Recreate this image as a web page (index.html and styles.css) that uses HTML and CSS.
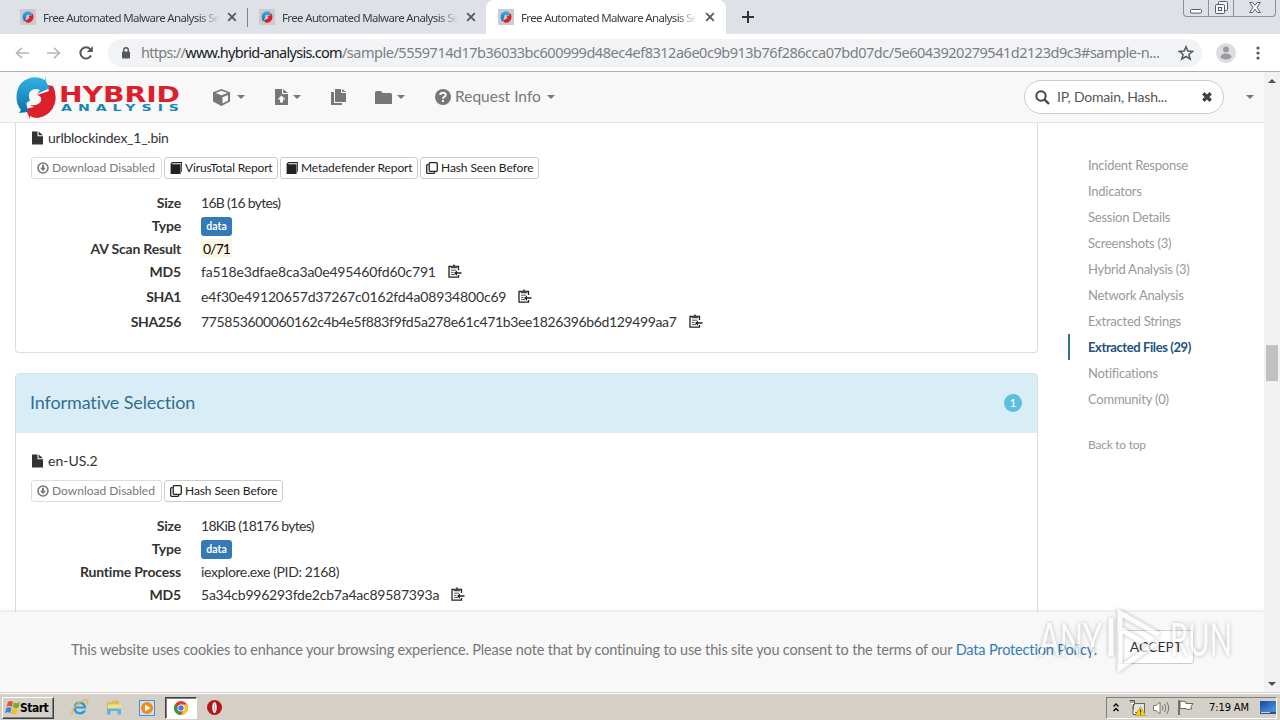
FILE: index.html
```html
<!DOCTYPE html>
<html lang="en">

<head>
  <meta charset="UTF-8">
  <meta name="viewport" content="width=device-width, initial-scale=1.0">
  <link rel="stylesheet" href="styles.css">
  <title>Free Automated Malware Analysis Service</title>
</head>

<body>

  <svg class="defs" width="0" height="0">
    <defs>
      <linearGradient id="blue" x1="0" y1="0" x2="0" y2="1"><stop offset="0" stop-color="#35b4e5"/><stop offset="1" stop-color="#0b71ae"/></linearGradient>
      <linearGradient id="screen" x1="0" y1="0" x2="1" y2="1"><stop offset="0" stop-color="#1746a0"/><stop offset="1" stop-color="#4e9be8"/></linearGradient>
      <symbol id="swirl" viewBox="0 0 40 43">
        <path d="M31 9L37 10Q41 18 39 27Q35 40 22 42Q17 42 14 40V43L11 36L9 33L18 31L14 29Q23 30 25 25Q26 20 21 19L33 15z" fill="#db202c"/>
        <path d="M29 0V4Q22 0 14 2Q3 5 1 16Q-1 27 5 34L3 37L12 36L11 30Q9 26 14 25Q11 17 16 14Q20 12 24 14L21 18L34 12Q30 8 29 0z" fill="url(#blue)"/>
      </symbol>
      <symbol id="close" viewBox="0 0 10 10"><path d="M1.2 1.2l7.6 7.6M8.8 1.2l-7.6 7.6" stroke="#55585c" stroke-width="1.8"/></symbol>
      <symbol id="file" viewBox="0 0 12 14"><path d="M0 0h6v5h6v9H0z" fill="#333"/><path d="M7.2 0L12 4H7.2z" fill="#333"/></symbol>
      <symbol id="download" viewBox="0 0 12 12"><circle cx="6" cy="6" r="5" fill="none" stroke="#777" stroke-width="1.6"/><path d="M5 2.8h2v3h2L6 9.2 3 5.8h2z" fill="#777"/></symbol>
      <symbol id="book" viewBox="0 0 12 12"><path d="M2.2 0H12v9.5l-.8.6V1.3H2.6L2 2.2h8.6V12H.6V1.8z" fill="#222"/></symbol>
      <symbol id="clone" viewBox="0 0 12 12"><rect x="3.2" y=".7" width="8.1" height="8.6" rx="1" fill="none" stroke="#222" stroke-width="1.3"/><path d="M2.6 2.7H1.5q-.8 0-.8.8v7q0 .8.8.8h6.4q.8 0 .8-.8v-.7" fill="none" stroke="#222" stroke-width="1.3"/></symbol>
      <symbol id="paste" viewBox="0 0 14 14"><path d="M10.5 6V2.5H1v10.7h9.500v-2.200" fill="none" stroke="#222" stroke-width="1.3"/><path d="M3 2h1.800Q5 .2 6 .2T7.200 2H9v2.200H3z" fill="#444"/><path d="M3 6.200h5M3 8.400h2.500M3 10.600h4" stroke="#555" stroke-width="1"/><path d="M6 9l3-2.600v1.900h4.500v1.500H9v1.900z" fill="#222"/></symbol>
    </defs>
  </svg>

  <!-- browser tabs -->
  <div class="tabs">
    <div class="tab">
      <span class="favicon"><svg width="12" height="12"><use href="#swirl"/></svg></span>
      <span class="tab-title">Free Automated Malware Analysis Se</span>
      <svg width="10" height="10"><use href="#close"/></svg>
    </div>
    <div class="tab second">
      <span class="favicon"><svg width="12" height="12"><use href="#swirl"/></svg></span>
      <span class="tab-title">Free Automated Malware Analysis Se</span>
      <svg width="10" height="10"><use href="#close"/></svg>
    </div>
    <div class="tab active">
      <span class="favicon"><svg width="12" height="12"><use href="#swirl"/></svg></span>
      <span class="tab-title">Free Automated Malware Analysis Se</span>
      <svg width="10" height="10"><use href="#close"/></svg>
    </div>
    <svg class="new-tab" width="12" height="12"><path d="M6 0v12M0 6h12" stroke="#333" stroke-width="2"/></svg>
    <div class="window-btns">
      <span class="win-btn"><svg width="12" height="5"><rect x=".5" y=".5" width="11" height="3.6" rx="1" fill="#fff" stroke="#555a66"/></svg></span>
      <span class="win-btn"><svg width="13" height="13" fill="#f4f5f8" stroke="#555a66"><rect x="3.5" y=".5" width="9" height="9" rx="1"/><rect x=".5" y="3.5" width="9" height="9" rx="1"/><rect x="3.5" y="6.5" width="3" height="3"/></svg></span>
      <span class="win-btn wide"><svg width="12" height="11"><path d="M.7.5h3L6 3.4 8.3.5h3L8 5.3l3.4 5.2h-3L6 7.3l-2.4 3.2h-3L4 5.3z" fill="#fff" stroke="#555a66"/></svg></span>
    </div>
  </div>

  <!-- address bar -->
  <div class="toolbar">
    <svg width="14" height="12"><path d="M14 6H1.5M7 .8L1.5 6 7 11.2" fill="none" stroke="#b5b7ba" stroke-width="1.6"/></svg>
    <svg class="forward" width="14" height="12"><path d="M0 6h12.5M7 .8L12.5 6 7 11.2" fill="none" stroke="#b5b7ba" stroke-width="1.6"/></svg>
    <svg class="reload" width="14" height="14"><path d="M12 9.5A5.6 5.6 0 1 1 11.3 3.3" fill="none" stroke="#55585c" stroke-width="2"/><path d="M13.8 0v6H7.8z" fill="#55585c"/></svg>
    <div class="address">
      <svg width="10" height="12"><rect x="1" y="4.5" width="8" height="7" rx="1" fill="#55585c"/><path d="M2.7 5V3a2.3 2.3 0 0 1 4.6 0v2" fill="none" stroke="#55585c" stroke-width="1.4"/></svg>
      <span class="url">https://<b>www.hybrid-analysis.com</b><span class="path">/sample/5559714d17b36033bc600999d48ec4ef8312a6e0c9b913b76f286cca07bd07dc/5e6043920279541d2123d9c3#sample-n...</span></span>
      <svg class="star" width="16" height="16"><path d="M8 1.7l1.8 4.4 4.8.3-3.7 3 1.3 4.7L8 11.5l-4.2 2.6 1.3-4.7-3.7-3 4.8-.3z" fill="none" stroke="#55585c" stroke-width="1.5"/></svg>
    </div>
    <svg class="avatar" width="20" height="20"><circle cx="10" cy="10" r="10" fill="#dcdde0"/><circle cx="10" cy="6.5" r="3" fill="#999b9f"/><ellipse cx="10" cy="13.5" rx="5.5" ry="3" fill="#999b9f"/></svg>
    <svg width="4" height="14" fill="#55585c"><circle cx="2" cy="2" r="1.6"/><circle cx="2" cy="7" r="1.6"/><circle cx="2" cy="12" r="1.6"/></svg>
  </div>

  <div class="browser">
    <div class="page">

      <div class="navbar">
        <svg class="logo" width="164" height="43">
          <use href="#swirl" width="40" height="43"/>
          <text x="43" y="25.5" font-size="20.5" textLength="121" lengthAdjust="spacingAndGlyphs" class="logo-top">HYBRID</text>
          <text x="45" y="35" font-size="9.5" textLength="124" lengthAdjust="spacingAndGlyphs" class="logo-bottom">ANALYSIS</text>
        </svg>
        <span class="nav-item cube">
          <svg width="17" height="17"><path d="M8.5 0L17 3.3v9.2L8.5 17 0 12.5V3.3z" fill="#777"/><path d="M2.5 4L8.5 1.8l6 2.2-6 2.2zM9.5 8.3l5.5-2.3v5.500l-5.500 3z" fill="#f8f8f8"/></svg>
          <i class="caret"></i>
        </span>
        <span class="nav-item upload">
          <svg width="13" height="16"><path d="M0 0h7v5h6v11H0z" fill="#777"/><path d="M8.2 0L13 4H8.2z" fill="#777"/><path d="M6.5 6.5l4 4H8v3H5v-3H2.500z" fill="#f8f8f8"/></svg>
          <i class="caret"></i>
        </span>
        <span class="nav-item copy">
          <svg width="15" height="16" fill="#777"><path d="M4 0h6v4h5v9H4zM11.2 0L15 3h-3.8zM0 3h3v11h8v2H0z"/></svg>
        </span>
        <span class="nav-item folder">
          <svg width="17" height="13"><path d="M0 1.5Q0 0 1.5 0H6l1.5 2h8Q17 2 17 3.5V13H0z" fill="#777"/></svg>
          <i class="caret"></i>
        </span>
        <span class="nav-item request">
          <svg width="16" height="16"><circle cx="8" cy="8" r="8" fill="#777"/><path d="M5.2 6Q5.3 3.7 8 3.7T10.7 6Q10.7 7.2 9.3 7.9 8 8.5 8 9.7M8 11v2" fill="none" stroke="#f8f8f8" stroke-width="2"/></svg>
          <span class="request-text">Request Info</span>
          <i class="caret"></i>
        </span>
        <div class="search">
          <svg width="15" height="15"><circle cx="6" cy="6" r="4.7" fill="none" stroke="#444" stroke-width="2"/><path d="M9.5 9.5l4.5 4.5" stroke="#444" stroke-width="2.4"/></svg>
          <span class="placeholder">IP, Domain, Hash...</span>
          <svg width="10" height="10"><path d="M1.3 1.3l7.4 7.4M8.7 1.3L1.3 8.7" stroke="#444" stroke-width="3.4"/></svg>
        </div>
        <i class="caret last"></i>
      </div>

      <div class="content">
        <div class="main">
          <div class="panel first">
            <div class="file-name"><svg width="11" height="14"><use href="#file"/></svg><span>urlblockindex_1_.bin</span></div>
            <div class="buttons">
              <span class="btn disabled"><svg width="12" height="12"><use href="#download"/></svg><span class="t-download">Download Disabled</span></span>
              <span class="btn"><svg width="12" height="12"><use href="#book"/></svg><span class="t-virus">VirusTotal Report</span></span>
              <span class="btn"><svg width="12" height="12"><use href="#book"/></svg><span class="t-meta">Metadefender Report</span></span>
              <span class="btn"><svg width="12" height="12"><use href="#clone"/></svg><span class="t-hash">Hash Seen Before</span></span>
            </div>
            <dl class="details">
              <dt>Size</dt><dd class="size">16B (16 bytes)</dd>
              <dt>Type</dt><dd><span class="label">data</span></dd>
              <dt>AV Scan Result</dt><dd><span class="av">0/71</span></dd>
              <dt>MD5</dt><dd><span class="md5">fa518e3dfae8ca3a0e495460fd60c791</span><svg width="14" height="14"><use href="#paste"/></svg></dd>
              <dt class="tall">SHA1</dt><dd class="tall"><span class="sha1">e4f30e49120657d37267c0162fd4a08934800c69</span><svg width="14" height="14"><use href="#paste"/></svg></dd>
              <dt class="tall">SHA256</dt><dd class="tall"><span class="sha256">775853600060162c4b4e5f883f9fd5a278e61c471b3ee1826396b6d129499aa7</span><svg width="14" height="14"><use href="#paste"/></svg></dd>
            </dl>
          </div>

          <div class="panel second-panel">
            <div class="panel-heading"><span class="heading-text">Informative Selection</span><span class="badge">1</span></div>
            <div class="file-name"><svg width="11" height="14"><use href="#file"/></svg><span>en-US.2</span></div>
            <div class="buttons">
              <span class="btn disabled"><svg width="12" height="12"><use href="#download"/></svg><span class="t-download">Download Disabled</span></span>
              <span class="btn"><svg width="12" height="12"><use href="#clone"/></svg><span class="t-hash">Hash Seen Before</span></span>
            </div>
            <dl class="details">
              <dt>Size</dt><dd class="size">18KiB (18176 bytes)</dd>
              <dt>Type</dt><dd><span class="label">data</span></dd>
              <dt>Runtime Process</dt><dd class="process">iexplore.exe (PID: 2168)</dd>
              <dt>MD5</dt><dd><span class="md5b">5a34cb996293fde2cb7a4ac89587393a</span><svg width="14" height="14"><use href="#paste"/></svg></dd>
            </dl>
          </div>
        </div>

        <div class="sidebar">
          <a>Incident Response</a>
          <a>Indicators</a>
          <a>Session Details</a>
          <a>Screenshots (3)</a>
          <a>Hybrid Analysis (3)</a>
          <a>Network Analysis</a>
          <a>Extracted Strings</a>
          <a class="current">Extracted Files (29)</a>
          <a>Notifications</a>
          <a>Community (0)</a>
          <a class="top">Back to top</a>
        </div>
      </div>

      <div class="cookies">
        <span class="cookie-text">This website uses cookies to enhance your browsing experience. Please note that by continuing to use this site you consent to the terms of our <a>Data Protection Policy</a>.</span>
        <span class="accept">ACCEPT</span>
      </div>
    </div>

    <div class="scrollbar">
      <i class="arrow up"></i>
      <div class="track"><div class="thumb"></div></div>
      <i class="arrow down"></i>
    </div>
  </div>

  <div class="taskbar">
    <div class="start">
      <svg width="15" height="15"><path d="M3 2q3-2 5 0L7 7Q4 5 1.5 7z" fill="#e6532a"/><path d="M9 2.5q3 1.5 6-.5L13.5 7.5Q11 9 8 7.5z" fill="#6fae2c"/><path d="M1.3 8q3-1.5 5.2 0L5.3 13Q3 11.5 0 13z" fill="#3b83d8"/><path d="M7.5 8.5q3 1.5 5.5 0L11.5 14Q9 15 6 13.5z" fill="#f6c022"/></svg>
      <span>Start</span>
    </div>
    <div class="task ie"><svg width="18" height="17"><path d="M15 9.5H5Q5.3 13 9 13q2 0 3-1.5h3Q13.5 15.5 9 15.5 2.5 15.3 2.5 9T9 2.5Q15.3 3 15 9.5zM5.2 7.5h7.2Q12 5 9 5T5.2 7.5z" fill="#2f9ae0"/><path d="M1.5 16Q-1 12 6 5.5 14-1 16.5 1.5q1 1-.5 4" fill="none" stroke="#e8bb3a" stroke-width="1.4"/></svg></div>
    <div class="task"><svg width="16" height="15"><path d="M1 2h5l1-1.5h5L13 3v8H1z" fill="#d9bd55"/><path d="M2 4.5h13V11H2z" fill="#f3e08a"/><path d="M1 8.500h14v6h-3.500V11h-7v3.500H1z" fill="#62b3e2"/></svg></div>
    <div class="task"><svg width="16" height="16"><rect x=".5" y=".5" width="15" height="15" fill="#cfe2f3" stroke="#4a8fce"/><circle cx="8" cy="8" r="6" fill="#f28a17"/><path d="M6.2 4.5L11.5 8l-5.3 3.5z" fill="#fff"/></svg></div>
    <div class="task pressed"><svg width="14" height="14"><circle cx="7" cy="7" r="7" fill="#dd3e30"/><path d="M1 3.4L4.5 9 7 14A7 7 0 0 1 1 3.4z" fill="#2c9f4b"/><path d="M7 3.5h6A7 7 0 0 1 7 14L10 8.5z" fill="#f8c82c"/><circle cx="7" cy="7" r="3.5" fill="#fff"/><circle cx="7" cy="7" r="2.7" fill="#3f7ee8"/></svg></div>
    <div class="task"><svg width="15" height="15"><circle cx="7.5" cy="7.5" r="7.5" fill="#b71319"/><ellipse cx="7.5" cy="7.5" rx="2.2" ry="5.6" fill="#fff"/><ellipse cx="7.5" cy="7.5" rx=".5" ry="4.5" fill="#c9a0a2"/></svg></div>
    <div class="tray">
      <svg class="chevrons" width="6" height="9"><path d="M.5 3.5L3 1l2.5 2.5M.5 8L3 5.5 5.5 8" fill="none" stroke="#000" stroke-width="1.4"/></svg>
      <svg class="net" width="17" height="16"><rect x="4.5" y="3.5" width="11" height="9" fill="#dde5e8" stroke="#666"/><path d="M.5.5h5v4H4v10h3M2 0v3M4 0v3" fill="#fff" stroke="#555"/><path d="M11.5 6.5L16.5 15.5h-10z" fill="#ffd800" stroke="#b59400" stroke-width=".6"/><path d="M11.5 9.5v3M11.5 13.5v1" stroke="#222" stroke-width="1.2"/></svg>
      <svg class="sound" width="17" height="14"><path d="M.5 4.5H3L7 1v12L3 9.5H.5z" fill="#fff" stroke="#777"/><path d="M9 4.5q2 2.5 0 5M11.5 3q3 4 0 8M13.5 1q4.5 6 0 12" fill="none" stroke="#777"/></svg>
      <svg class="flag" width="16" height="15"><path d="M1 0v15" stroke="#555" stroke-width="1.5"/><path d="M2 1.5q3-1 6 .5v1.5h7l-2 3 .5 2.5Q10 10 7 8.500H2z" fill="#fff" stroke="#666"/></svg>
      <span class="clock">7:19 AM</span>
      <svg class="desktop" width="16" height="13"><rect width="16" height="10.5" fill="url(#screen)"/><path d="M0 10.5h16V13H0z" fill="#27538f"/><path d="M1 11.5h9" stroke="#b9d2ee"/></svg>
    </div>
  </div>

  <svg class="watermark" width="200" height="68">
    <text x="3" y="49" textLength="63" lengthAdjust="spacingAndGlyphs">ANY</text>
    <path d="M75 49V11M84 50V6L123 28M84 50V61L122 35M84 22L108 36"/>
    <text x="134" y="49" textLength="62" lengthAdjust="spacingAndGlyphs">RUN</text>
  </svg>

</body>

</html>
```
FILE: styles.css
```css
* {
  box-sizing: border-box;
}

body {
  margin: 0;
  width: 1280px;
  height: 720px;
  overflow: hidden;
  display: flex;
  flex-direction: column;
  background-color: #fff;
  font-family: Lato, sans-serif;
  font-size: 14px;
  color: #333;
  white-space: nowrap;
}

svg {
  display: block;
  flex: none;
}

.defs {
  position: absolute;
}

/* browser */
.tabs {
  height: 34px;
  flex: none;
  display: flex;
  background-color: #dee1e6;
  font-family: "Noto Sans", sans-serif;
  font-size: 11.5px;
  color: #3c4043;
}

.tab {
  width: 239px;
  display: flex;
  align-items: center;
  padding-left: 20px;
}

.tab.second {
  padding-left: 12px;
  margin-left: 8px;
  width: 231px;
  position: relative;
}

.tab.second::before {
  content: "";
  position: absolute;
  left: 0;
  top: 8px;
  width: 1px;
  height: 19px;
  background-color: #80848b;
}

.tab.active {
  width: 240px;
  margin-left: 8px;
  padding-left: 12px;
  background-color: #fff;
  border-radius: 8px 8px 0 0;
}

.favicon {
  width: 16px;
  height: 16px;
  flex: none;
  display: flex;
  align-items: center;
  justify-content: center;
  background-color: #cfc9cc;
}

.tab-title {
  width: 177px;
  margin: 0 7px 0 7px;
  letter-spacing: -0.65px;
  -webkit-mask-image: linear-gradient(to right, #000 156px, transparent 176px);
}

.new-tab {
  margin: 11px 0 0 16px;
}

.window-btns {
  display: flex;
  height: 17px;
  margin-left: auto;
  margin-right: 4px;
  border: 1px solid #8b909b;
  border-top: none;
  border-radius: 0 0 4px 4px;
}

.win-btn {
  width: 25px;
  display: flex;
  align-items: flex-end;
  justify-content: center;
  padding-bottom: 2px;
  border-right: 1px solid #8b909b;
}

.win-btn.wide {
  width: 41px;
  border-right: none;
  padding-bottom: 3px;
}

.toolbar {
  height: 38px;
  flex: none;
  display: flex;
  align-items: center;
  padding-left: 15px;
  border-bottom: 1px solid #adb1ad;
}

.forward {
  margin-left: 18px;
}

.reload {
  margin-left: 18px;
}

.address {
  width: 1094px;
  height: 28px;
  margin-left: 15px;
  display: flex;
  align-items: center;
  padding: 0 8px 0 13px;
  border-radius: 14px;
  background-color: #f1f3f4;
  font-family: "Noto Sans", sans-serif;
  font-size: 14.5px;
}

.url {
  margin-left: 10px;
  padding-bottom: 2px;
  color: #7b7f84;
  letter-spacing: -0.72px;
}

.url b {
  font-weight: normal;
  color: #202124;
}

.url .path {
  letter-spacing: -0.48px;
}

.star {
  margin-left: auto;
}

.avatar {
  margin: 0 20px 0 14px;
}

.browser {
  flex: 1;
  min-height: 0;
  display: flex;
}

.page {
  width: 1264px;
  display: flex;
  flex-direction: column;
}

/* navbar */
.navbar {
  height: 51px;
  flex: none;
  display: flex;
  align-items: center;
  padding-left: 16px;
  background-color: #f8f8f8;
  border-bottom: 1px solid #e3e3e3;
  color: #777;
}

.logo {
  overflow: visible;
}

.logo-top {
  font-family: "DejaVu Sans", sans-serif;
  font-weight: bold;
  fill: #db202c;
}

.logo-bottom {
  font-family: "DejaVu Sans", sans-serif;
  font-weight: bold;
  letter-spacing: 4px;
  fill: #1788b4;
}

.caret {
  border: 4px solid transparent;
  border-top-color: #777;
  border-bottom: none;
}

.nav-item {
  display: flex;
  align-items: center;
}

.cube {
  margin-left: 33px;
}

.nav-item .caret {
  margin-left: 7px;
}

.upload {
  margin-left: 30px;
}

.upload .caret,
.folder .caret {
  margin-left: 5px;
}

.copy {
  margin-left: 30px;
}

.folder {
  margin-left: 29px;
}

.request {
  margin-left: 30px;
}

.request .caret {
  margin-left: 6px;
}

.request-text {
  margin-left: 4px;
  padding-bottom: 2px;
  font-size: 15.5px;
}

.search {
  width: 200px;
  height: 34px;
  margin-left: auto;
  padding: 0 11px 0 10px;
  display: flex;
  align-items: center;
  background-color: #fff;
  border: 1px solid #ccc;
  border-radius: 17px;
  color: #555;
}

.placeholder {
  margin: 0 auto 0 7px;
  padding-bottom: 1px;
  letter-spacing: -0.2px;
}

.caret.last {
  margin: 0 10px 0 22px;
}

/* report */
.content {
  flex: 1;
  min-height: 0;
  overflow: hidden;
  display: flex;
}

.main {
  width: 1023px;
  margin-left: 15px;
}

.panel {
  margin-bottom: 20px;
  border: 1px solid #ddd;
  border-radius: 4px;
}

.panel.first {
  height: 230px;
  padding-top: 6px;
  border-top: none;
  border-radius: 0 0 4px 4px;
}

.panel.second-panel {
  padding-bottom: 60px;
}

.panel-heading {
  height: 59px;
  margin-bottom: 19px;
  padding: 0 15px 1px 14px;
  display: flex;
  align-items: center;
  justify-content: space-between;
  background-color: #d9edf7;
  color: #31708f;
  font-size: 18px;
  letter-spacing: -0.12px;
}

.heading-text {
  padding-bottom: 2px;
}

.badge {
  width: 18px;
  height: 18px;
  border-radius: 9px;
  background-color: #5bc0de;
  color: #fff;
  font-size: 12px;
  line-height: 18px;
  text-align: center;
}

.file-name {
  height: 18px;
  display: flex;
  align-items: center;
  gap: 5px;
  padding-left: 16px;
}

.file-name span {
  padding-bottom: 1px;
}

.first .file-name {
  letter-spacing: -0.25px;
}

.file-name svg {
  margin-bottom: 1px;
}

.buttons {
  display: flex;
  gap: 2px;
  margin: 10px 0 0 15px;
}

.btn {
  height: 22px;
  display: flex;
  align-items: center;
  gap: 3px;
  padding: 0 5px;
  border: 1px solid #ccc;
  border-radius: 3px;
  font-size: 12px;
  color: #222;
}

.btn span {
  padding-bottom: 1px;
}

.btn.disabled {
  border-color: #ddd;
  color: #777;
}

.t-download {
  width: 104px;
}

.t-virus {
  width: 87px;
  letter-spacing: -0.15px;
}

.t-meta {
  width: 111px;
  letter-spacing: -0.1px;
}

.t-hash {
  width: 92px;
  letter-spacing: -0.1px;
}

.details {
  margin: 12px 0 0;
  display: grid;
  grid-template-columns: 165px auto;
  column-gap: 20px;
  grid-auto-rows: minmax(23px, auto);
  align-items: center;
}

.details dt {
  text-align: right;
  font-weight: bold;
  letter-spacing: -0.18px;
}

.details dt.tall {
  height: 25px;
  line-height: 27px;
  letter-spacing: -0.4px;
}

.details dd {
  margin: 0;
  display: flex;
  align-items: center;
  color: #333;
}

.details dd.tall {
  padding-top: 2px;
}

.details dd svg {
  margin: 0 0 1px 12px;
}

.details .size {
  letter-spacing: -0.7px;
}

.details .process {
  letter-spacing: -0.38px;
}

.label {
  width: 31px;
  height: 19px;
  margin-top: 3px;
  margin-bottom: 1px;
  border-radius: 3px;
  background-color: #337ab7;
  color: #fff;
  font-size: 10.5px;
  font-weight: bold;
  line-height: 19px;
  text-align: center;
}

.av {
  width: 31px;
  padding: 1px 2px;
  background-color: #fcf8e3;
  color: #000;
  letter-spacing: -0.9px;
}

.md5 {
  width: 235px;
  letter-spacing: -0.15px;
}

.sha1 {
  width: 305px;
  letter-spacing: -0.17px;
}

.sha256 {
  width: 476px;
  letter-spacing: -0.37px;
}

.md5b {
  width: 238px;
  letter-spacing: -0.24px;
}

.sidebar {
  margin: 29px 0 0 30px;
  display: flex;
  flex-direction: column;
  font-size: 13px;
  letter-spacing: -0.24px;
  color: #999;
}

.sidebar a {
  height: 26px;
  padding-left: 18px;
  line-height: 26px;
  border-left: 2px solid transparent;
}

.sidebar .current {
  border-left-color: #31708f;
  color: #23527c;
  font-weight: bold;
  letter-spacing: -0.4px;
}

.sidebar .top {
  margin-top: 20px;
  font-size: 12px;
}

.cookies {
  height: 80px;
  flex: none;
  display: flex;
  align-items: center;
  padding: 0 0 6px 71px;
  background-color: #f8f8f8;
  box-shadow: 0 0 4px rgba(0, 0, 0, 0.2);
  font-size: 14.5px;
  color: #777;
}

.cookie-text {
  width: 1047px;
  letter-spacing: -0.16px;
}

.cookie-text a {
  color: #337ab7;
}

.accept {
  width: 76px;
  height: 34px;
  margin-bottom: 5px;
  border: 1px solid #ccc;
  border-radius: 3px;
  background-color: #fff;
  color: #333;
  font-size: 14px;
  line-height: 31px;
  text-align: center;
}

.scrollbar {
  width: 16px;
  display: flex;
  flex-direction: column;
  align-items: center;
  padding: 7px 0 6px;
  background-color: #f1f1f1;
}

.arrow {
  border: 4px solid transparent;
}

.arrow.up {
  border-top: none;
  border-bottom-color: #505050;
}

.arrow.down {
  border-bottom: none;
  border-top-color: #505050;
}

.track {
  flex: 1;
  padding-top: 262px;
}

.thumb {
  width: 12px;
  height: 36px;
  background-color: #c1c1c1;
}

/* taskbar */
.taskbar {
  height: 28px;
  flex: none;
  display: flex;
  align-items: center;
  padding: 2px 0 0 2px;
  background-color: #d4d0c8;
  border-top: 1px solid #d4d0c8;
  box-shadow: inset 0 1px 0 #fff;
  font-family: "DejaVu Sans Condensed", "DejaVu Sans", sans-serif;
  color: #000;
}

.start {
  width: 52px;
  height: 22px;
  display: flex;
  align-items: center;
  padding-left: 2px;
  border: 1px solid;
  border-color: #fff #404040 #404040 #fff;
  box-shadow: inset -1px -1px 0 #808080;
  font-size: 12px;
  font-weight: bold;
  letter-spacing: -0.5px;
}

.task {
  width: 32px;
  height: 22px;
  margin-right: 1.5px;
  display: flex;
  align-items: center;
  justify-content: center;
}

.task.ie {
  margin-left: 10px;
}

.task.pressed {
  background-color: #fff;
  border: 1px solid;
  border-color: #404040 #fff #fff #404040;
  box-shadow: inset 1px 1px 0 #808080;
}

.tray {
  width: 171px;
  height: 22px;
  margin-left: auto;
  margin-right: 3px;
  padding-left: 6px;
  display: flex;
  align-items: center;
  border: 1px solid;
  border-color: #808080 #fff #fff #808080;
}

.net {
  margin-left: 10px;
}

.sound {
  margin-left: 7px;
}

.flag {
  margin-left: 8px;
}

.clock {
  margin-left: 15px;
  width: 41px;
  font-size: 11px;
  letter-spacing: -0.1px;
}

.desktop {
  margin-left: 11px;
}

.watermark {
  position: absolute;
  left: 1036px;
  top: 607px;
  overflow: visible;
  fill: #fff;
  opacity: 0.65;
  font-size: 47px;
  filter: drop-shadow(0 0 2px rgba(0, 0, 0, 0.4));
}

.watermark path {
  fill: none;
  stroke: #fff;
  stroke-width: 5px;
}
```
